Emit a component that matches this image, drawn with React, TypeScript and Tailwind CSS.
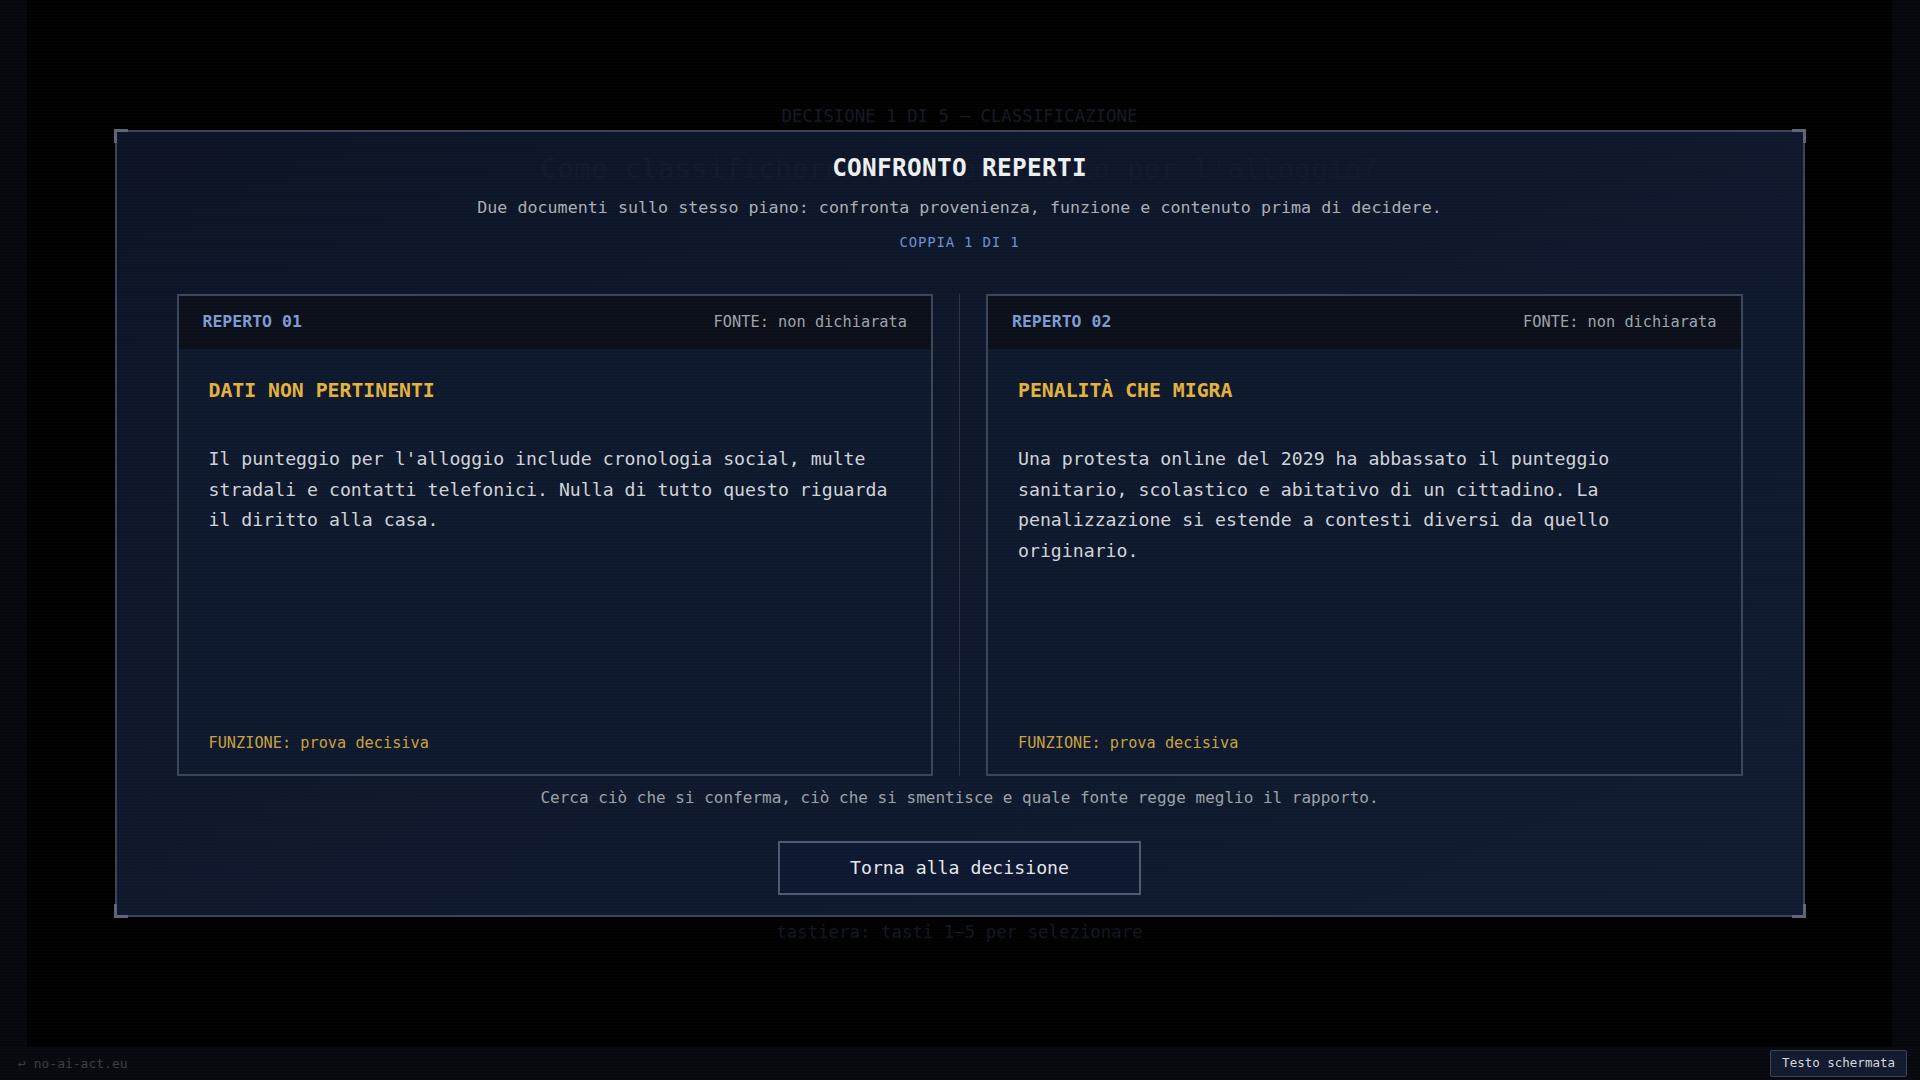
import React from "react";

const mono = "font-['DejaVu_Sans_Mono','Liberation_Mono',monospace]";

function Corner({ pos }: { pos: "tl" | "tr" | "bl" | "br" }) {
  const base = "absolute w-[14px] h-[14px] border-[#5c6676] pointer-events-none";
  const cls =
    pos === "tl"
      ? "-top-[3px] -left-[3px] border-t-[3px] border-l-[3px]"
      : pos === "tr"
      ? "-top-[3px] -right-[3px] border-t-[3px] border-r-[3px]"
      : pos === "bl"
      ? "-bottom-[3px] -left-[3px] border-b-[3px] border-l-[3px]"
      : "-bottom-[3px] -right-[3px] border-b-[3px] border-r-[3px]";
  return <div className={`${base} ${cls}`} />;
}

function Card({
  id,
  title,
  lines,
}: {
  id: string;
  title: string;
  lines: string[];
}) {
  return (
    <div className="flex flex-col h-[482px] border-2 border-[#3a4659] bg-[#0f192d]">
      <div className="h-[53px] flex items-center justify-between px-[24px] bg-[#0a0f1a]">
        <span className="text-[16.5px] font-bold text-[#7e9bd2]">{id}</span>
        <span className="text-[15.3px] text-[#9ea3ab]">FONTE: non dichiarata</span>
      </div>
      <div className="flex-1 flex flex-col px-[30px] pt-[29px] pb-[21px]">
        <div className="text-[19.8px] leading-[26px] font-bold text-[#e3b23c]">{title}</div>
        <div className="mt-[40px] text-[18.2px] leading-[30.6px] text-[#d0d3d8]">
          {lines.map((l, i) => (
            <div key={i}>{l}</div>
          ))}
        </div>
        <div className="mt-auto text-[15.25px] leading-[20px] text-[#c9a23d]">
          FUNZIONE: prova decisiva
        </div>
      </div>
    </div>
  );
}

export default function App() {
  return (
    <div className={`relative w-[1920px] h-[1080px] overflow-hidden bg-black flex flex-col ${mono}`}>
      <div className="flex-1 flex">
        <div className="w-[27px] bg-[#05070c]" />
        <div className="flex-1 flex flex-col items-center">
          <div className="mt-[106px] h-[20px] leading-[20px] text-[17.4px] text-[#141a24]">
            DECISIONE 1 DI 5 — CLASSIFICAZIONE
          </div>
          <div className="relative mt-[4px] w-[1690px] h-[787px] border-2 border-[#3a4455] bg-gradient-to-br from-[#0c1426] via-[#0f182c] to-[#101b31] flex flex-col items-center pt-[21px] pb-[20px] px-[60px]">
            <Corner pos="tl" />
            <Corner pos="tr" />
            <Corner pos="bl" />
            <Corner pos="br" />
            <div className="absolute top-[21px] left-0 right-0 flex justify-center pointer-events-none">
              <span className="text-[27px] leading-[32px] text-[#111a2e] tracking-[0.5px]">
                Come classificheresti il punteggio per l'alloggio?
              </span>
            </div>
            <div className="relative h-[30px] leading-[30px] text-[24.4px] font-bold text-[#eceef0] tracking-[0.3px]">
              CONFRONTO REPERTI
            </div>
            <div className="mt-[12px] h-[24px] leading-[24px] text-[16.7px] text-[#a9aeb6]">
              Due documenti sullo stesso piano: confronta provenienza, funzione e contenuto prima di decidere.
            </div>
            <div className="mt-[13px] h-[20px] leading-[20px] text-[14px] tracking-[0.8px] text-[#6d8fd0]">
              COPPIA 1 DI 1
            </div>
            <div className="mt-[42px] w-full grid grid-cols-[1fr_1px_1fr] gap-x-[26px]">
              <Card
                id="REPERTO 01"
                title="DATI NON PERTINENTI"
                lines={[
                  "Il punteggio per l'alloggio include cronologia social, multe",
                  "stradali e contatti telefonici. Nulla di tutto questo riguarda",
                  "il diritto alla casa.",
                ]}
              />
              <div className="bg-[#2a3446]" />
              <Card
                id="REPERTO 02"
                title="PENALITÀ CHE MIGRA"
                lines={[
                  "Una protesta online del 2029 ha abbassato il punteggio",
                  "sanitario, scolastico e abitativo di un cittadino. La",
                  "penalizzazione si estende a contesti diversi da quello",
                  "originario.",
                ]}
              />
            </div>
            <div className="mt-[12px] h-[20px] leading-[20px] text-[16px] text-[#9ca1a9]">
              Cerca ciò che si conferma, ciò che si smentisce e quale fonte regge meglio il rapporto.
            </div>
            <button className="mt-[33px] w-[363px] h-[56px] border-2 border-[#4f5a6e] bg-[#0e1830] text-[18.2px] text-[#e3e6ea]">
              Torna alla decisione
            </button>
          </div>
          <div className="mt-[5px] h-[20px] leading-[20px] text-[17.4px] text-[#121821]">
            tastiera: tasti 1–5 per selezionare
          </div>
        </div>
        <div className="w-[28px] bg-[#05070c]" />
      </div>
      <div className="h-[33px] bg-[#07090e] flex items-center justify-between pl-[18px] pr-[13px]">
        <span className="text-[13px] text-[#3a3f47]">↩ no-ai-act.eu</span>
        <span className="h-[27px] px-[11px] flex items-center border border-[#3a4558] rounded-[2px] bg-[#111a2f] text-[12.5px] text-[#d3d6db]">
          Testo schermata
        </span>
      </div>
      <div className="pointer-events-none absolute inset-0 bg-[repeating-linear-gradient(0deg,rgba(255,255,255,0.012)_0px,rgba(255,255,255,0.012)_1px,transparent_1px,transparent_3px)]" />
    </div>
  );
}
